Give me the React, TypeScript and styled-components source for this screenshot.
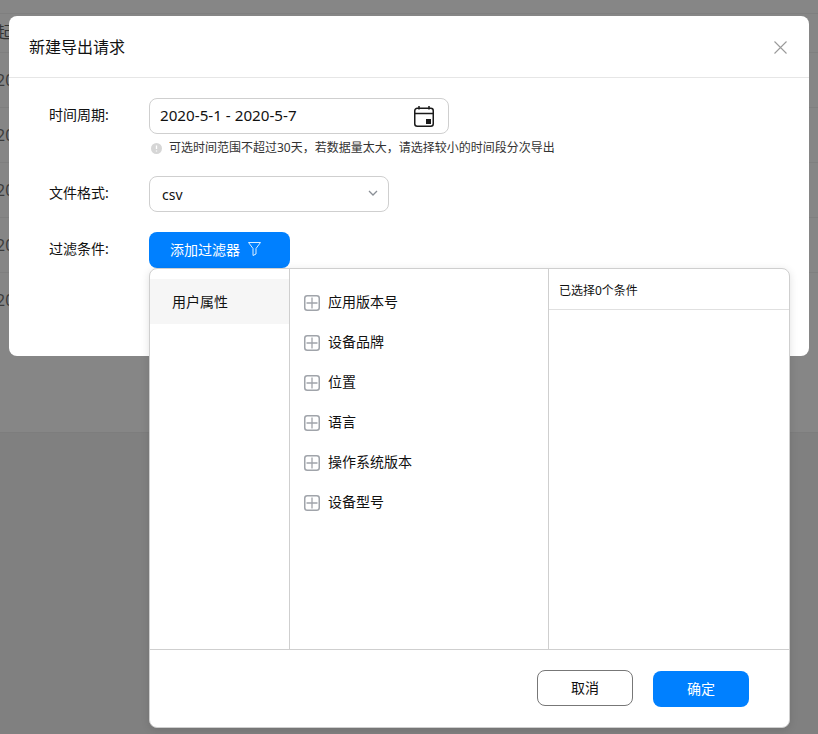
import React from 'react';
import styled, { createGlobalStyle } from 'styled-components';

const GlobalStyle = createGlobalStyle`
  html, body {
    margin: 0;
    padding: 0;
    background: #808080;
    font-family: 'Noto Sans', 'Noto Sans CJK SC', sans-serif;
    color: #111;
  }
`;

const Page = styled.div`
  position: relative;
  width: 818px;
  height: 734px;
  overflow: hidden;
  background: #808080;
`;

const BehindTable = styled.div`
  display: flex;
  flex-direction: column;
  padding-top: 13px;
  height: 419px;
  background: #868686;
  border-bottom: 1px solid #7d7d7d;
`;

const BehindHeader = styled.div`
  height: 38px;
  text-indent: -4px;
  border-top: 1px solid #7f7f7f;
  font-size: 16px;
  line-height: 36px;
  color: #333;
`;

const BehindRow = styled.div`
  height: 54px;
  text-indent: -4px;
  border-top: 1px solid #7f7f7f;
  font-size: 16px;
  line-height: 54px;
  color: #3c3c3c;
`;

const Overlay = styled.div`
  position: absolute;
  inset: 0;
  padding: 16px 9px;
`;

const Modal = styled.div`
  position: relative;
  width: 800px;
  height: 340px;
  background: #fff;
  border-radius: 8px;
`;

const ModalHeader = styled.div`
  display: flex;
  align-items: center;
  justify-content: space-between;
  height: 61px;
  padding: 0 20px;
  border-bottom: 1px solid #e6e6e6;
`;

const ModalTitle = styled.h2`
  margin: -2px 0 0;
  font-size: 16px;
  font-weight: 400;
`;

const CloseButton = styled.button`
  display: flex;
  padding: 2px 0 0;
  margin-right: 2px;
  border: 0;
  background: none;
  color: #9a9a9a;
`;

const Form = styled.div`
  display: flex;
  flex-direction: column;
  padding: 20px 40px 0;
`;

const FormRow = styled.div<{ $gap: number }>`
  display: flex;
  margin-bottom: ${(p) => p.$gap}px;
`;

const Label = styled.label`
  width: 100px;
  flex-shrink: 0;
  font-size: 14px;
  line-height: 34px;
`;

const Field = styled.div`
  display: flex;
  flex-direction: column;
`;

const InputBox = styled.div<{ $width: number }>`
  display: flex;
  align-items: center;
  justify-content: space-between;
  box-sizing: border-box;
  width: ${(p) => p.$width}px;
  height: 36px;
  border: 1px solid #cfcfcf;
  border-radius: 8px;
  background: #fff;
`;

const DateBox = styled(InputBox)`
  padding: 0 14px 0 10px;
  font-size: 15.2px;
`;

const DateText = styled.span`
  margin-top: -2px;
`;

const SelectBox = styled(InputBox)`
  padding: 0 10px 0 12px;
  font-size: 14px;
`;

const Chevron = styled.svg`
  margin-top: -2px;
`;

const Hint = styled.div`
  display: flex;
  align-items: center;
  gap: 7px;
  margin-top: 5px;
  padding-left: 2px;
  font-size: 12px;
  line-height: 18px;
  color: #333;
`;

const PrimaryButton = styled.button`
  display: flex;
  align-items: center;
  justify-content: center;
  box-sizing: border-box;
  height: 36px;
  padding: 0 0 2px;
  border: 0;
  border-radius: 8px;
  background: #0080ff;
  color: #fff;
  font-family: inherit;
  font-size: 14px;
`;

const FilterButton = styled(PrimaryButton)`
  justify-content: flex-start;
  width: 141px;
  padding-left: 21px;
  gap: 8px;
`;

const Panel = styled.div`
  position: absolute;
  left: 140px;
  top: 252px;
  display: flex;
  flex-direction: column;
  box-sizing: border-box;
  width: 641px;
  height: 460px;
  background: #fff;
  border: 1px solid #cfcfcf;
  border-radius: 8px;
  box-shadow: 0 2px 8px rgba(0, 0, 0, 0.12);
`;

const PanelBody = styled.div`
  display: grid;
  grid-template-columns: 140px 259px 1fr;
  flex: 1;
  min-height: 0;
`;

const CategoryColumn = styled.div`
  padding-top: 10px;
  border-right: 1px solid #cfcfcf;
`;

const CategoryItem = styled.div`
  height: 45px;
  padding-left: 22px;
  background: #f6f6f6;
  font-size: 14px;
  line-height: 45px;
`;

const AttrColumn = styled.div`
  display: flex;
  flex-direction: column;
  padding-top: 14px;
  border-right: 1px solid #cfcfcf;
`;

const AttrRow = styled.div`
  display: flex;
  align-items: center;
  gap: 8px;
  height: 40px;
  padding-left: 14px;
  font-size: 14px;
`;

const AttrName = styled.span`
  margin-bottom: 4px;
`;

const SelectedColumn = styled.div`
  display: flex;
  flex-direction: column;
`;

const SelectedHeader = styled.div`
  height: 40px;
  padding-left: 10px;
  border-bottom: 1px solid #e0e0e0;
  font-size: 12px;
  line-height: 43px;
`;

const PanelFooter = styled.div`
  display: flex;
  justify-content: flex-end;
  align-items: center;
  gap: 20px;
  height: 77px;
  padding-right: 40px;
  border-top: 1px solid #cfcfcf;
`;

const CancelButton = styled.button`
  box-sizing: border-box;
  width: 96px;
  height: 36px;
  margin-top: -2px;
  padding: 0 0 2px;
  border: 1px solid #777;
  border-radius: 8px;
  background: #fff;
  color: #111;
  font-family: inherit;
  font-size: 14px;
`;

const ConfirmButton = styled(PrimaryButton)`
  width: 96px;
`;

const attrs = ['应用版本号', '设备品牌', '位置', '语言', '操作系统版本', '设备型号'];

function PlusBox() {
  return (
    <svg width="16" height="16" viewBox="0 0 16 16" fill="none" stroke="#a0a4aa">
      <rect x="0.75" y="0.75" width="14.5" height="14.5" rx="2.5" strokeWidth="1.5" />
      <path d="M8 2.5v11M2.5 8h11" strokeWidth="1.3" />
    </svg>
  );
}

function CalendarIcon() {
  return (
    <svg width="20" height="21" viewBox="0 0 20 21" fill="none" stroke="#1a1a1a" strokeWidth="1.5">
      <rect x="0.75" y="2.25" width="18.5" height="18" rx="2.5" />
      <path d="M1 7.5h18M5 0v3.5M15 0v3.5" />
      <rect x="12" y="13" width="5" height="5" fill="#1a1a1a" stroke="none" />
    </svg>
  );
}

export default function App() {
  return (
    <Page>
      <GlobalStyle />
      <BehindTable>
        <BehindHeader>起始</BehindHeader>
        {[0, 1, 2, 3, 4].map((i) => (
          <BehindRow key={i}>2020</BehindRow>
        ))}
      </BehindTable>
      <Overlay>
        <Modal>
          <ModalHeader>
            <ModalTitle>新建导出请求</ModalTitle>
            <CloseButton aria-label="关闭">
              <svg width="13" height="13" viewBox="0 0 13 13" fill="none" stroke="currentColor" strokeWidth="1.1">
                <path d="M0.5 0.5l12 12M12.5 0.5l-12 12" />
              </svg>
            </CloseButton>
          </ModalHeader>
          <Form>
            <FormRow $gap={19}>
              <Label>时间周期:</Label>
              <Field>
                <DateBox $width={300}>
                  <DateText>2020-5-1 - 2020-5-7</DateText>
                  <CalendarIcon />
                </DateBox>
                <Hint>
                  <svg width="11" height="11" viewBox="0 0 11 11">
                    <circle cx="5.5" cy="5.5" r="5.5" fill="#d6d6d6" />
                    <path d="M5.5 2.5v3.6M5.5 7.4v1.2" stroke="#fff" strokeWidth="1.3" />
                  </svg>
                  可选时间范围不超过30天，若数据量太大，请选择较小的时间段分次导出
                </Hint>
              </Field>
            </FormRow>
            <FormRow $gap={20}>
              <Label>文件格式:</Label>
              <SelectBox $width={240}>
                <span>csv</span>
                <Chevron width="10" height="6" viewBox="0 0 10 6" fill="none" stroke="#8a8f96" strokeWidth="1.3">
                  <path d="M1 1l4 4 4-4" />
                </Chevron>
              </SelectBox>
            </FormRow>
            <FormRow $gap={0}>
              <Label>过滤条件:</Label>
              <FilterButton>
                添加过滤器
                <svg width="13" height="14" viewBox="0 0 13 14" fill="none" stroke="#dbeeff" strokeWidth="1">
                  <path d="M0.5 0.5h12L8 6.5V12L5 13.5V6.5z" />
                </svg>
              </FilterButton>
            </FormRow>
          </Form>
          <Panel>
            <PanelBody>
              <CategoryColumn>
                <CategoryItem>用户属性</CategoryItem>
              </CategoryColumn>
              <AttrColumn>
                {attrs.map((a) => (
                  <AttrRow key={a}>
                    <PlusBox />
                    <AttrName>{a}</AttrName>
                  </AttrRow>
                ))}
              </AttrColumn>
              <SelectedColumn>
                <SelectedHeader>已选择0个条件</SelectedHeader>
              </SelectedColumn>
            </PanelBody>
            <PanelFooter>
              <CancelButton>取消</CancelButton>
              <ConfirmButton>确定</ConfirmButton>
            </PanelFooter>
          </Panel>
        </Modal>
      </Overlay>
    </Page>
  );
}
